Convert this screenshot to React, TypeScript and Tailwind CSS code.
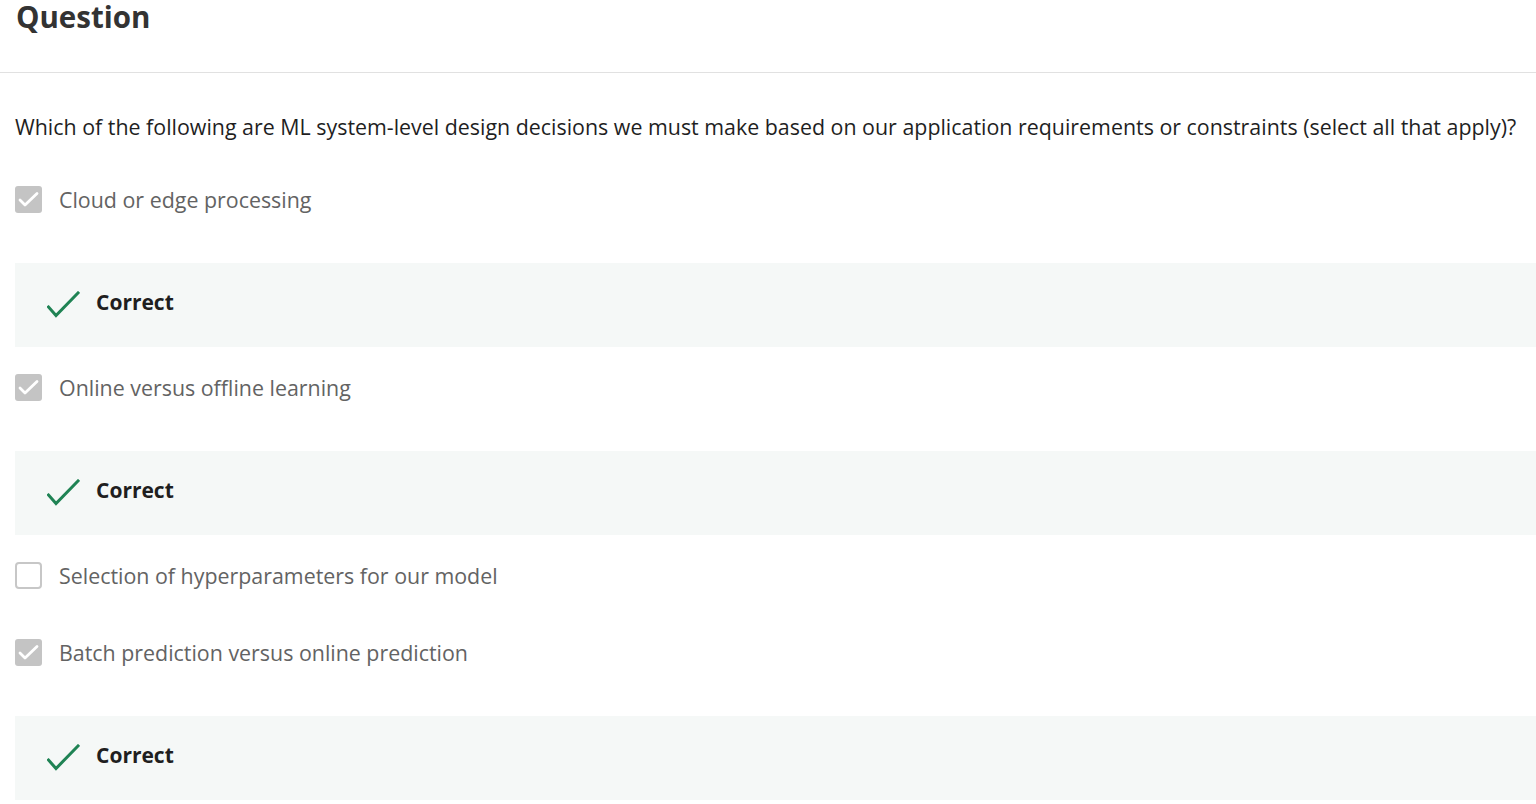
import React from "react";

const font = { fontFamily: "'Open Sans', 'Noto Sans', sans-serif" };

function CheckBox({ checked }: { checked: boolean }) {
  if (checked) {
    return (
      <div className="w-[27px] h-[27px] rounded-[3px] bg-[#c4c4c4] shrink-0">
        <svg width="27" height="27" viewBox="0 0 27 27" fill="none">
          <path d="M5 14 L10 19 L22 7.5" stroke="#ffffff" strokeWidth="2.8" strokeLinecap="round" strokeLinejoin="round" />
        </svg>
      </div>
    );
  }
  return <div className="w-[27px] h-[27px] rounded-[4px] border-2 border-[#c7c7c7] bg-white shrink-0" />;
}

function Option({ label, checked, mb }: { label: string; checked: boolean; mb: string }) {
  return (
    <div className={`flex items-center h-[27px] ${mb}`}>
      <CheckBox checked={checked} />
      <span className="ml-[17px] text-[21.4px] leading-6 text-[#636363] whitespace-nowrap">{label}</span>
    </div>
  );
}

function Feedback() {
  return (
    <div className="h-[84px] bg-[#f5f8f7] flex items-center pl-[32px] mb-[27px]">
      <svg width="33" height="27" viewBox="0 0 33 27" fill="none" className="shrink-0 mt-[-1px]">
        <path d="M1.5 16 L9 24.5 L31 2" stroke="#1f8354" strokeWidth="3" strokeLinecap="square" />
      </svg>
      <span className="ml-[16px] mb-[6px] text-[21px] leading-6 font-bold text-[#1f1f1f]">Correct</span>
    </div>
  );
}

export default function App() {
  return (
    <div className="w-[1536px] h-[804px] bg-white overflow-hidden" style={font}>
      <div className="h-[73px] border-b border-[#e1e1e1] pl-[16px]">
        <h1 className="text-[29.5px] leading-[34px] font-bold text-[#333333]">Question</h1>
      </div>
      <div className="pl-[15px]">
        <p className="mt-[42px] text-[21.4px] leading-6 text-[#1f1f1f] whitespace-nowrap">
          Which of the following are ML system-level design decisions we must make based on our application requirements or constraints (select all that apply)?
        </p>
        <div className="mt-[47px]">
          <Option label="Cloud or edge processing" checked={true} mb="mb-[50px]" />
          <Feedback />
          <Option label="Online versus offline learning" checked={true} mb="mb-[50px]" />
          <Feedback />
          <Option label="Selection of hyperparameters for our model" checked={false} mb="mb-[50px]" />
          <Option label="Batch prediction versus online prediction" checked={true} mb="mb-[50px]" />
          <Feedback />
        </div>
      </div>
    </div>
  );
}
